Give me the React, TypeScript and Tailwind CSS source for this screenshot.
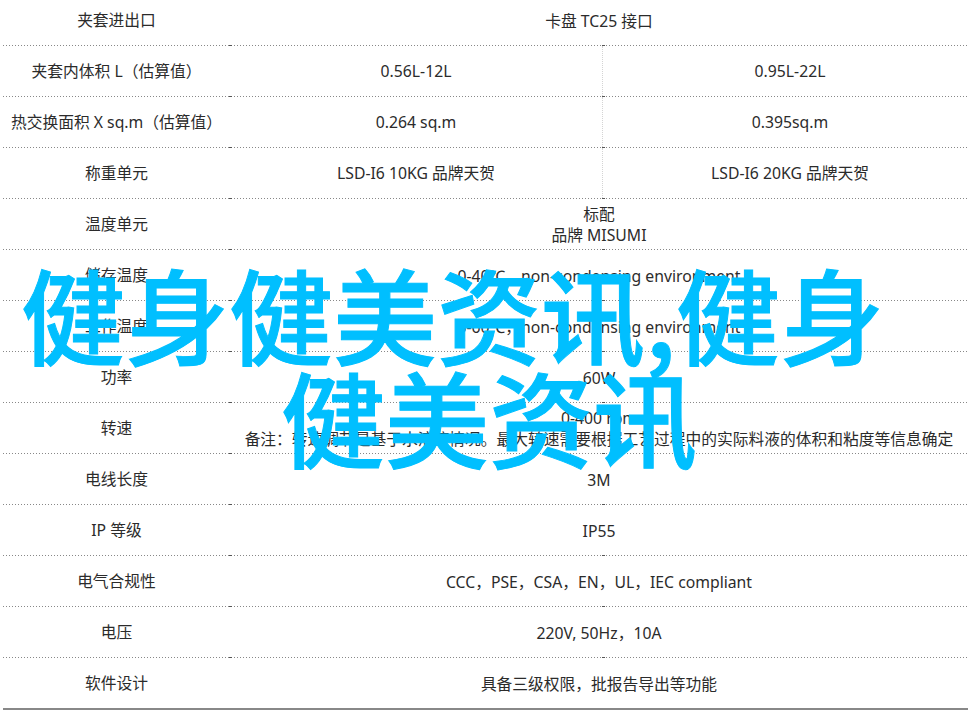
const rows: { label: string; a: string; b?: string; lines?: string[] }[] = [
  { label: '夹套进出口', a: '卡盘 TC25 接口' },
  { label: '夹套内体积 L（估算值）', a: '0.56L-12L', b: '0.95L-22L' },
  { label: '热交换面积 X sq.m（估算值）', a: '0.264 sq.m', b: '0.395sq.m' },
  { label: '称重单元', a: 'LSD-I6 10KG 品牌天贺', b: 'LSD-I6 20KG 品牌天贺' },
  { label: '温度单元', a: '', lines: ['标配', '品牌 MISUMI'] },
  { label: '储存温度', a: '0-40℃，non-condensing environment' },
  { label: '工作温度', a: '5-60℃，non-condensing environment' },
  { label: '功率', a: '60W' },
  { label: '转速', a: '', lines: ['0-400 rpm', '备注：转速调节是基于水溶液情况。最大转速需要根据工艺过程中的实际料液的体积和粘度等信息确定'] },
  { label: '电线长度', a: '3M' },
  { label: 'IP 等级', a: 'IP55' },
  { label: '电气合规性', a: 'CCC，PSE，CSA，EN，UL，IEC compliant' },
  { label: '电压', a: '220V, 50Hz，10A' },
  { label: '软件设计', a: '具备三级权限，批报告导出等功能' },
];

function Row({ row, last }: { row: (typeof rows)[number]; last: boolean }) {
  return (
    <div className="relative">
      <div className="flex h-[50px]">
        <div className="flex w-[227px] shrink-0 items-center justify-center pt-[2px]">{row.label}</div>
        {row.b ? (
          <>
            <div className="flex w-[373px] shrink-0 items-center justify-center border-r border-dotted border-[#d4d4d4] pt-[2px]">{row.a}</div>
            <div className="flex flex-1 items-center justify-center pl-[9px] pt-[2px]">{row.b}</div>
          </>
        ) : (
          <div className="flex flex-1 flex-col items-center justify-center pt-[2px] leading-[21px]">
            {row.lines ? row.lines.map((line) => <div key={line}>{line}</div>) : row.a}
          </div>
        )}
      </div>
      {last ? (
        <div className="h-[2px] bg-[#888888]" />
      ) : (
        <>
          <div className="h-px bg-[repeating-linear-gradient(90deg,#888888_0,#888888_1px,transparent_1px,transparent_3px)]" />
          <div className="absolute bottom-0 left-[226px] h-px w-[3px] bg-[#555555]" />
          <div className="absolute bottom-0 left-[599px] h-px w-[3px] bg-[#555555]" />
        </>
      )}
    </div>
  );
}

export default function App() {
  return (
    <div className="relative h-[716px] w-[971px] overflow-hidden bg-white font-['Noto_Sans','Noto_Sans_CJK_SC',sans-serif] text-[15.75px] text-[#2b2b2b]">
      <div className="mx-[3px] -mt-[5px]">
        {rows.map((row, i) => (
          <Row key={row.label} row={row} last={i === rows.length - 1} />
        ))}
      </div>
      {/* headline over the table */}
      <div className="absolute left-0 right-0 top-[261px] flex flex-col items-center font-['Noto_Sans_CJK_SC',sans-serif] text-[104px] leading-[103px] font-medium text-[#00bfff] [-webkit-text-stroke:1px_#00bfff]">
        <div className="pr-[66px]">健身健美资讯,健身</div>
        <div className="pl-[7px]">健美资讯</div>
      </div>
    </div>
  );
}
